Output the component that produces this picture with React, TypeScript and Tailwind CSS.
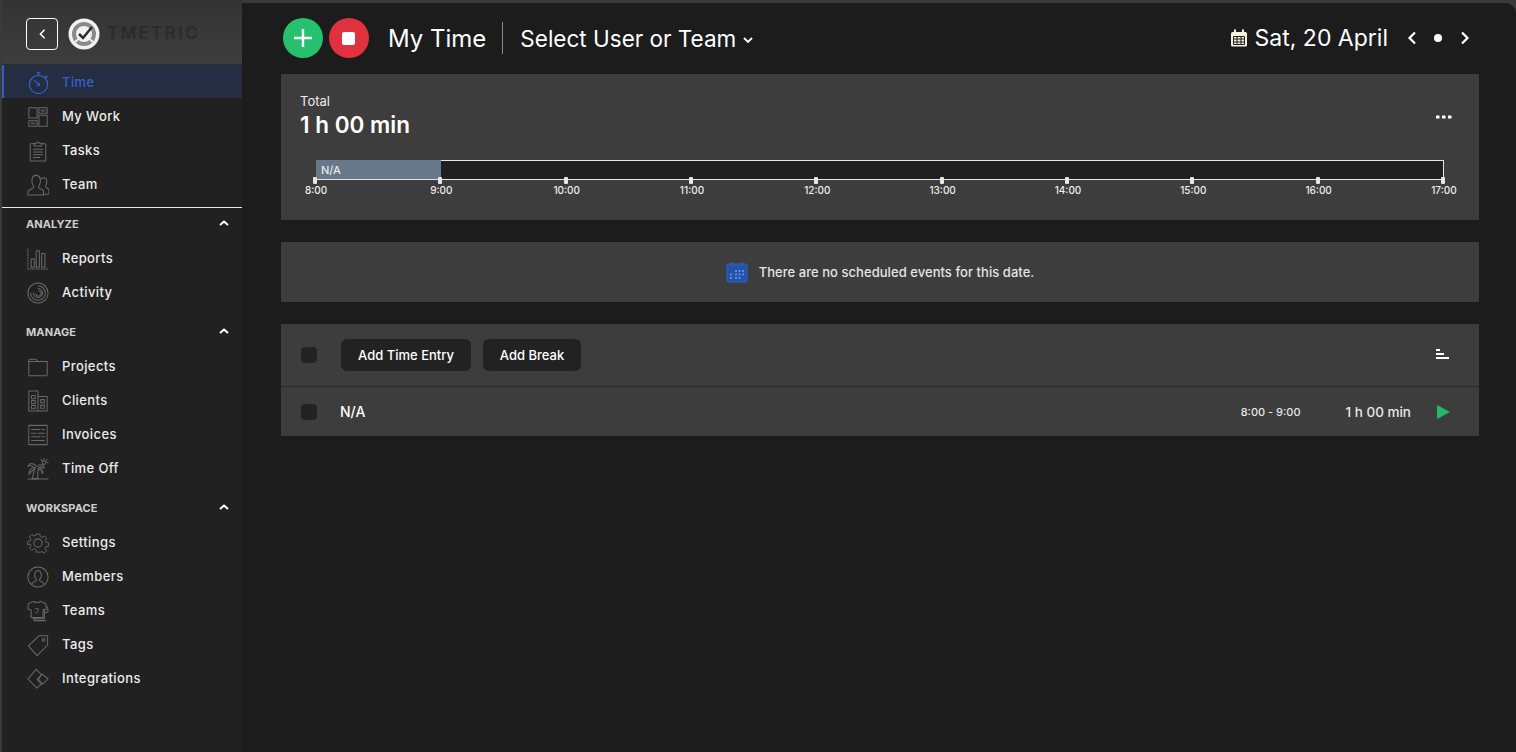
import type { ReactNode } from 'react';

const FONT = 'font-["Inter","Noto_Sans",sans-serif]';

function Icon({ children }: { children: ReactNode }) {
  return (
    <svg
      viewBox="0 0 24 24"
      className="h-[22px] w-[22px] shrink-0"
      fill="none"
      stroke="#6a6a6a"
      strokeWidth="1.1"
      strokeLinejoin="round"
      strokeLinecap="round"
    >
      {children}
    </svg>
  );
}

const icons: Record<string, ReactNode> = {
  time: (
    <svg viewBox="0 0 24 24" className="h-[23px] w-[23px] shrink-0" fill="none" stroke="#2f62c9" strokeWidth="1.2" strokeLinecap="round">
      <circle cx="12" cy="14" r="9.5" />
      <path d="M10.5 2h3M12 2v2.4M19.5 5l2 1.6M19 6.8l1.4-1.6" />
      <circle cx="12" cy="14" r="1.1" />
      <path d="M11.2 13.2 7.5 9.5" />
    </svg>
  ),
  work: (
    <Icon>
      <rect x="2" y="2" width="9" height="11" />
      <rect x="13" y="2" width="9" height="6" />
      <rect x="2" y="16" width="9" height="6" />
      <rect x="13" y="10" width="9" height="12" />
      <rect x="15" y="4" width="5" height="2" fill="#555" stroke="none" />
      <rect x="4" y="18" width="5" height="2" fill="#555" stroke="none" />
    </Icon>
  ),
  tasks: (
    <Icon>
      <path d="M8 4H4.5a1 1 0 0 0-1 1v17a1 1 0 0 0 1 1h15a1 1 0 0 0 1-1V5a1 1 0 0 0-1-1H16" />
      <path d="M8 6.5V3.6h2.4a1.7 1.7 0 0 1 3.2 0H16v2.9z" />
      <path d="M7 10h10M7 13h10M7 16h10M7 19h7" />
    </Icon>
  ),
  team: (
    <Icon>
      <path d="M1 23v-3.5c0-2 4-3 6-4.4.6-.6.3-1.6-.3-2.4C5.600 11 5.200 9 5.400 6.500 5.700 3.500 7.500 1.500 10 1.500s4.300 2 4.600 5c.2 2.500-.2 4.500-1.300 6.100-.6.8-.9 1.800-.3 2.500 1.500 1.100 4 1.900 5 3.200V23z" />
      <path d="M15.500 5.500c.5-.8 1.400-1.300 2.500-1.300 2.100 0 3.500 1.800 3.600 3.900.1 1.900-.3 3.200-1.100 4.400-.5.700-.5 1.400 0 1.900 1 .8 2.600 1.300 3.400 2.300V22h-5" />
    </Icon>
  ),
  reports: (
    <Icon>
      <path d="M1 1v22h22" strokeDasharray="1.5 1.5" />
      <rect x="4.500" y="12" width="3.500" height="9" />
      <rect x="10" y="3" width="3.500" height="18" />
      <rect x="16" y="6" width="3.500" height="15" />
    </Icon>
  ),
  activity: (
    <Icon>
      <circle cx="12" cy="12" r="11" />
      <path d="M12 4a8 8 0 1 1-8 8" />
      <path d="M12 7a5 5 0 1 1-5 5" />
      <path d="M13 9.500a3 3 0 1 1-3.500 3.500" />
    </Icon>
  ),
  projects: (
    <Icon>
      <path d="M2 20.500V5a1.500 1.500 0 0 1 1.500-1.500h6L12 6h10v14.500a1 1 0 0 1-1 1H3a1 1 0 0 1-1-1z" />
      <path d="M2 6h10" />
    </Icon>
  ),
  clients: (
    <Icon>
      <path d="M2 23V1h10v22M12 7h10v16H2" />
      <rect x="5" y="6" width="4" height="3.500" />
      <rect x="5" y="11.500" width="4" height="3.500" />
      <rect x="5" y="17" width="4" height="3.500" />
      <rect x="15" y="10.500" width="4" height="3.500" />
      <rect x="15" y="16.500" width="4" height="3.500" />
    </Icon>
  ),
  invoices: (
    <Icon>
      <path d="M2 1.500h20v21H2z" strokeDasharray="1.500 1" />
      <path d="M5 6h9M16 6h3M5 10h5M12 10h7M5 14h9M16 14h3M5 18h14" />
    </Icon>
  ),
  timeoff: (
    <Icon>
      <path d="M10 9C7 5 3 5 1 9c2-1 4-1 5 0" />
      <path d="M9.500 10C5 10 2 13 2 18c2-3 4-5 7-6" />
      <path d="M11 9c3-3 7-2 8 2-2-1.500-4-1.500-6-1 3 1 5 4 4 7-1-3-3-5-5-6" />
      <path d="M8 11c0 4-1 8-2.500 11.500h6.500c-.5-4-.5-8 .5-11.500" />
      <path d="M1 23h22" />
      <circle cx="18.500" cy="5" r="2" />
      <path d="M18.500.5v1.200M23 5h-1.200M21.800 1.800l-1 1M15.200 1.800l1 1" />
    </Icon>
  ),
  settings: (
    <Icon>
      <path d="M10 1h4l.7 3.200 2.100.9 2.800-1.800 2.800 2.800-1.800 2.800.9 2.100 3.200.7v4l-3.200.7-.9 2.100 1.800 2.800-2.800 2.800-2.800-1.800-2.100.9L14 23h-4l-.7-3.200-2.100-.9-2.800 1.800-2.800-2.800 1.800-2.800-.9-2.100L-.700 14v-4l3.200-.7.900-2.100L1.600 4.400l2.800-2.800 2.800 1.800 2.100-.9z" transform="translate(1.300 1.300) scale(.9)" />
      <circle cx="12" cy="12" r="4.500" />
    </Icon>
  ),
  members: (
    <Icon>
      <circle cx="12" cy="12" r="11" />
      <path d="M5 20c.5-2.500 5-2.700 5.500-4.500 0-1-1.500-2-2-4C8 8 9.500 5 12 5s4 3 3.500 6.500c-.5 2-2 3-2 4 .5 1.800 5 2 5.500 4.500" />
    </Icon>
  ),
  teams: (
    <Icon>
      <path d="M7 1.500 1.500 4 1 10l3.500.8V19h13v-8.200L21 10l-.5-6L15 1.500c-1 1.500-7 1.500-8 0z" />
      <path d="M17.500 10.500 19 11v9.500H6.500M19 14l4-1-.5-5.500" />
      <path d="M8 20.500v2h12" />
      <path d="M9 9.500h3.500l-1.500 1.500c2 0 2 3-.5 3-1 0-1.500-.5-1.700-1" strokeWidth=".9" />
    </Icon>
  ),
  tags: (
    <Icon>
      <path d="M1.500 13 13 2h9.500v10L11 23.500z" />
      <circle cx="18" cy="6.500" r="1.500" />
    </Icon>
  ),
  integrations: (
    <Icon>
      <path d="M10 1.500 16 7.500l-5 5 4.500 5-4.500 4.500L1 12z" />
      <path d="M17.500 7.500 24 13l-6 5.500-4.500-5.500z" transform="translate(-1 -1)" />
    </Icon>
  ),
};

function NavItem({ icon, label, active, top }: { icon: string; label: string; active?: boolean; top?: boolean }) {
  const state = active
    ? 'mb-px h-[33px] border-l-2 border-[#2f62c9] bg-[#252d43] pl-[23px] text-[#2f62c9]'
    : 'h-[34px] pl-[25px] text-[#ececec]';
  return (
    <div className={`flex items-center ${top ? 'pt-[2px]' : ''} ${state}`}>
      <div className="flex w-[35px] items-center">{icons[icon]}</div>
      <span className="text-[13px] font-medium tracking-[0.4px]">{label}</span>
    </div>
  );
}

function SectionHead({ label }: { label: string }) {
  return (
    <div className="flex h-[34px] items-center justify-between pb-[2px] pl-[24px] pr-[13px]">
      <span className="text-[11px] font-bold tracking-[0.1px] text-[#cfcfcf]">{label}</span>
      <svg viewBox="0 0 10 6" className="mb-[2px] h-[6px] w-[10px]" fill="none" stroke="#fff" strokeWidth="2">
        <path d="M1 5l4-3.500L9 5" />
      </svg>
    </div>
  );
}

function Sidebar() {
  return (
    <aside className="flex w-[240px] shrink-0 flex-col bg-[#212121]">
      <div className="flex h-[65px] items-center border-b border-[#2a2a2a] bg-gradient-to-b from-[#333333] to-[#3d3d3d] pl-[24px] pt-[3px]">
        <div className="flex h-[32px] w-[32px] items-center justify-center rounded-[4px] border border-white">
          <svg viewBox="0 0 8 12" className="h-[10px] w-[7px]" fill="none" stroke="#fff" strokeWidth="1.800">
            <path d="M6.500 1 1.500 6l5 5" />
          </svg>
        </div>
        <svg viewBox="0 0 32 32" className="ml-[10px] h-[32px] w-[32px]">
          <circle cx="16" cy="16" r="15.500" fill="#f2f2f2" />
          <circle cx="16" cy="16" r="10" fill="none" stroke="#8a8a8a" strokeWidth="4" />
          <path d="M7 24l6-5M25 24l-6-5" stroke="#f2f2f2" strokeWidth="2" />
          <path d="M11 16l4 4 9-11" fill="none" stroke="#2b2b2b" strokeWidth="2.500" />
        </svg>
        <span className="ml-[7px] text-[17px] font-bold tracking-[2.200px] text-[#2c2c2c]">TMETRIC</span>
      </div>
      <NavItem icon="time" label="Time" active top />
      <NavItem icon="work" label="My Work" top />
      <NavItem icon="tasks" label="Tasks" top />
      <NavItem icon="team" label="Team" top />
      <div className="mt-[6px] h-px bg-[#e6e6e6]" />
      <SectionHead label="ANALYZE" />
      <NavItem icon="reports" label="Reports" />
      <NavItem icon="activity" label="Activity" />
      <div className="h-[6px]" />
      <SectionHead label="MANAGE" />
      <NavItem icon="projects" label="Projects" />
      <NavItem icon="clients" label="Clients" />
      <NavItem icon="invoices" label="Invoices" />
      <NavItem icon="timeoff" label="Time Off" />
      <div className="h-[6px]" />
      <SectionHead label="WORKSPACE" />
      <NavItem icon="settings" label="Settings" />
      <NavItem icon="members" label="Members" />
      <NavItem icon="teams" label="Teams" />
      <NavItem icon="tags" label="Tags" />
      <NavItem icon="integrations" label="Integrations" />
    </aside>
  );
}

function Header() {
  return (
    <header className="flex h-[71px] items-center pb-px pl-[41px] pr-[9px] text-white">
      <button className="flex h-[40px] w-[40px] items-center justify-center rounded-full bg-[#25c16f]">
        <svg viewBox="0 0 20 20" className="h-[20px] w-[20px]" stroke="#fff" strokeWidth="2.400">
          <path d="M10 1v18M1 10h18" />
        </svg>
      </button>
      <button className="ml-[6px] flex h-[40px] w-[40px] items-center justify-center rounded-full bg-[#e0313f] pr-px">
        <span className="h-[13px] w-[13px] rounded-[2px] bg-white" />
      </button>
      <h1 className="ml-[19px] mt-px text-[24px] font-normal">My Time</h1>
      <div className="ml-[16px] h-[32px] w-px bg-[#8a8a8a]" />
      <span className="ml-[17px] mt-px text-[22.5px] font-normal">Select User or Team</span>
      <svg viewBox="0 0 10 6" className="ml-[7px] mt-[3px] h-[6px] w-[10px]" fill="none" stroke="#fff" strokeWidth="1.800">
        <path d="M1 1l4 4 4-4" />
      </svg>
      <div className="ml-auto flex items-center">
        <svg viewBox="0 0 18 18" className="h-[18px] w-[18px]">
          <rect x="1" y="3" width="16" height="14.500" rx="1.500" fill="#f7f3df" />
          <rect x="4" y="0.500" width="2" height="4" fill="#f7f3df" />
          <rect x="12" y="0.500" width="2" height="4" fill="#f7f3df" />
          <path d="M3.500 7.500h11v8h-11zM7 7.500v8M11 7.500v8M3.500 10h11M3.500 13h11" fill="none" stroke="#1c1c1c" strokeWidth="1" />
        </svg>
        <span className="ml-[7px] mt-px text-[23px] font-normal">Sat, 20 April</span>
        <svg viewBox="0 0 10 14" className="ml-[19px] h-[14px] w-[10px]" fill="none" stroke="#fff" strokeWidth="2.200">
          <path d="M8 1.500 2.500 7 8 12.500" />
        </svg>
        <span className="ml-[17px] h-[8px] w-[8px] rounded-full bg-white" />
        <svg viewBox="0 0 10 14" className="ml-[18px] h-[14px] w-[10px]" fill="none" stroke="#fff" strokeWidth="2.200">
          <path d="M2 1.500 7.500 7 2 12.500" />
        </svg>
      </div>
    </header>
  );
}

const HOURS = ['8:00', '9:00', '10:00', '11:00', '12:00', '13:00', '14:00', '15:00', '16:00', '17:00'];

function Timeline() {
  return (
    <div className="mx-[35px] mt-[20px]">
      <div className="relative h-[19px] border-r border-t border-[#e6e6e6] bg-[#202020]">
        <div className="absolute -top-px -bottom-px left-0 flex w-[125px] items-center bg-[#66788a] pl-[5px] text-[11px] font-medium text-[#e8e8e8]">N/A</div>
      </div>
      <div className="relative h-px bg-[#e6e6e6]" />
      <div className="relative -mt-[3px] flex justify-between">
        {HOURS.map((h) => (
          <div key={h} className="flex w-0 flex-col items-center">
            <span className="h-[7px] w-[4px] shrink-0 -translate-x-[1px] rounded-[1px] bg-[#e6e6e6]" />
            <span className="-mt-[1px] text-[10px] font-medium leading-[14px] text-[#ececec]">{h}</span>
          </div>
        ))}
      </div>
    </div>
  );
}

function Checkbox() {
  return <span className="h-[16px] w-[16px] rounded-[4px] bg-[#232323]" />;
}

export default function App() {
  return (
    <div className={`flex h-screen w-full overflow-hidden bg-[#3a3a3a] pl-[2px] ${FONT}`}>
      <Sidebar />
      <main className="mt-[3px] flex min-w-0 flex-1 flex-col rounded-tr-[10px] bg-[#1c1c1c] pr-[37px]">
        <Header />
        <div className="ml-[39px]">
          <section className="h-[146px] bg-[#3d3d3d] text-white">
            <div className="flex items-start justify-between pl-[19px] pr-[27px] pt-[19px]">
              <div>
                <div className="text-[13px] leading-[16px] text-[#ececec]">Total</div>
                <div className="mt-px text-[22.5px] font-semibold leading-[30px]">1 h 00 min</div>
              </div>
              <svg viewBox="0 0 16 4" className="mt-[22px] h-[4px] w-[16px]" fill="#fff">
                <rect x="0" y="0.500" width="3.500" height="3" />
                <rect x="6" y="0.500" width="3.500" height="3" />
                <rect x="12" y="0.500" width="3.500" height="3" />
              </svg>
            </div>
            <Timeline />
          </section>

          <section className="mt-[22px] flex h-[60px] items-center justify-center bg-[#3d3d3d]">
            <svg viewBox="0 0 22 22" className="h-[22px] w-[22px]">
              <rect x="1" y="3" width="20" height="18" rx="1.500" fill="#2553a8" stroke="#2f62c9" />
              <path d="M6 1v4M16 1v4" stroke="#2f62c9" strokeWidth="1.200" />
              <path d="M9 9h2v2H9zM12.500 9h2v2h-2zM16 9h2v2h-2zM4 12.500h2v2H4zM9 12.500h2v2H9zM12.500 12.500h2v2h-2zM16 12.500h2v2h-2zM4 16h2v2H4zM9 16h2v2H9zM12.500 16h2v2h-2z" fill="#5e8ae0" />
            </svg>
            <span className="ml-[11px] pt-[2px] text-[13px] font-medium tracking-[0.05px] text-[#e4e4e4]">There are no scheduled events for this date.</span>
          </section>

          <section className="mt-[22px] bg-[#3d3d3d] text-white">
            <div className="flex h-[63px] items-center border-b border-[#2b2b2b] pl-[20px] pr-[30px]">
              <Checkbox />
              <button className="ml-[24px] h-[32px] w-[130px] rounded-[6px] bg-[#222222] pt-[2px] text-[13px] font-medium">Add Time Entry</button>
              <button className="ml-[12px] h-[32px] w-[98px] rounded-[6px] bg-[#222222] pt-[2px] text-[13px] font-medium">Add Break</button>
              <svg viewBox="0 0 13 10" className="mb-[2px] ml-auto h-[10px] w-[13px]" fill="#fff">
                <rect x="0" y="0" width="4" height="2" />
                <rect x="0" y="4" width="8" height="2" />
                <rect x="0" y="8" width="13" height="2" />
              </svg>
            </div>
            <div className="flex h-[49px] items-center pl-[20px] pr-[29px]">
              <Checkbox />
              <span className="ml-[23px] text-[14px] font-medium">N/A</span>
              <span className="ml-auto pt-[2px] text-[11px] font-medium text-[#e8e8e8]">8:00 - 9:00</span>
              <span className="ml-[45px] pt-[2px] text-[13.5px] font-medium text-[#e8e8e8]">1 h 00 min</span>
              <svg viewBox="0 0 13 14" className="ml-[26px] h-[14px] w-[13px]" fill="#25b86a">
                <path d="M0 0l13 7-13 7z" />
              </svg>
            </div>
          </section>
        </div>
      </main>
    </div>
  );
}
